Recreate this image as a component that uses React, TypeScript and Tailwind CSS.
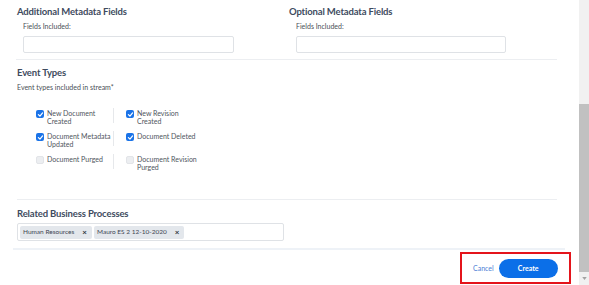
const headingCls =
  "text-[9.5px] leading-[14px] font-bold text-[#3e4b5e] tracking-[-0.15px]";
const smallCls = "text-[7px] leading-[10px] text-[#4a4f57]";

interface EventOption {
  label: string;
  checked: boolean;
}

const rows: [EventOption, EventOption][] = [
  [
    { label: "New Document Created", checked: true },
    { label: "New Revision Created", checked: true },
  ],
  [
    { label: "Document Metadata Updated", checked: true },
    { label: "Document Deleted", checked: true },
  ],
  [
    { label: "Document Purged", checked: false },
    { label: "Document Revision Purged", checked: false },
  ],
];

function Check({ checked }: { checked: boolean }) {
  if (!checked) {
    return (
      <span className="mt-[2px] block h-[8px] w-[8px] shrink-0 rounded-[2px] border border-[#e2e4e8] bg-[#eceef1]" />
    );
  }
  return (
    <span className="mt-[2px] flex h-[8px] w-[8px] shrink-0 items-center justify-center rounded-[2px] bg-[#1a73e8]">
      <svg viewBox="0 0 10 10" className="h-[7px] w-[7px]">
        <path
          d="M2 5.2 L4.2 7.3 L8 2.8"
          fill="none"
          stroke="white"
          strokeWidth="1.8"
          strokeLinecap="round"
          strokeLinejoin="round"
        />
      </svg>
    </span>
  );
}

function Option({ option }: { option: EventOption }) {
  return (
    <div className="flex gap-[3px]">
      <Check checked={option.checked} />
      <span className="w-[64px] pt-[2px] text-[7px] leading-[7.5px] text-[#50555d]">
        {option.label}
      </span>
    </div>
  );
}

function Tag({ label }: { label: string }) {
  return (
    <span className="flex h-[13px] items-center gap-[8px] rounded-[2px] bg-[#e3e7ec] pl-[3px] pr-[5px] text-[6.5px] text-[#3e4652]">
      {label}
      <span className="text-[8px] font-bold leading-none text-[#2f3640]">×</span>
    </span>
  );
}

export default function App() {
  return (
    <div
      className="flex h-[285px] w-[589px] overflow-hidden bg-white"
      style={{ fontFamily: "Lato, 'Open Sans', sans-serif" }}
    >
      <div className="flex w-[579px] flex-col">
        <div className="flex pt-[5px]">
          <div className="w-[272px] pl-[17px]">
            <h2 className={headingCls}>Additional Metadata Fields</h2>
            <div className="pl-[6px]">
              <p className={`${smallCls} mt-[2px]`}>Fields Included:</p>
              <div className="mt-[5px] h-[17px] w-[211px] rounded-[2px] border border-[#dfe2e6]" />
            </div>
          </div>
          <div className="pl-[17px]">
            <h2 className={headingCls}>Optional Metadata Fields</h2>
            <div className="pl-[7px]">
              <p className={`${smallCls} mt-[2px]`}>Fields Included:</p>
              <div className="mt-[5px] h-[17px] w-[210px] rounded-[2px] border border-[#dfe2e6]" />
            </div>
          </div>
        </div>

        <div className="ml-[16px] mt-[6px] h-px w-[541px] bg-[#eceef1]" />

        <div className="pl-[17px] pt-[6px]">
          <h2 className={headingCls}>Event Types</h2>
          <p className={`${smallCls} mt-[2px]`}>Event types included in stream*</p>
          <div className="mt-[16px] flex flex-col">
            {rows.map((row, i) => (
              <div key={i} className="flex h-[23px]">
                <div className="ml-[19px] h-[15px] w-[78px] border-r border-[#e6e8eb]">
                  <Option option={row[0]} />
                </div>
                <div className="pl-[12px]">
                  <Option option={row[1]} />
                </div>
              </div>
            ))}
          </div>
        </div>

        <div className="ml-[17px] mt-[22px] h-px w-[540px] bg-[#eceef1]" />

        <div className="pl-[17px] pt-[7px]">
          <h2 className={headingCls}>Related Business Processes</h2>
          <div className="mt-[2px] flex h-[18px] w-[267px] items-center gap-[2px] rounded-[2px] border border-[#dfe2e6] pl-[2px]">
            <Tag label="Human Resources" />
            <Tag label="Mauro ES 2 12-10-2020" />
          </div>
        </div>

        <div className="ml-[13px] mt-[7px] h-[2px] w-[552px] bg-[#eef2f7]" />

        <div className="flex justify-end pr-[8px] pt-[2px]">
          <div className="flex h-[32px] w-[111px] items-center gap-[5px] border-2 border-[#e4141b] pl-[11px]">
            <button className="text-[7px] text-[#4d7fd6]">Cancel</button>
            <button className="h-[19px] w-[59px] rounded-full bg-[#0b6fe8] text-[7px] font-bold text-white">
              Create
            </button>
          </div>
        </div>
      </div>

      <div className="flex w-[10px] flex-col bg-[#f1f1f1]">
        <div className="h-[104px]" />
        <div className="h-[168px] bg-[#c1c1c1]" />
        <div className="flex flex-1 items-center justify-center">
          <svg viewBox="0 0 6 4" className="h-[3px] w-[5px]">
            <path d="M0 0 L6 0 L3 4 Z" fill="#a3a3a3" />
          </svg>
        </div>
      </div>
    </div>
  );
}
